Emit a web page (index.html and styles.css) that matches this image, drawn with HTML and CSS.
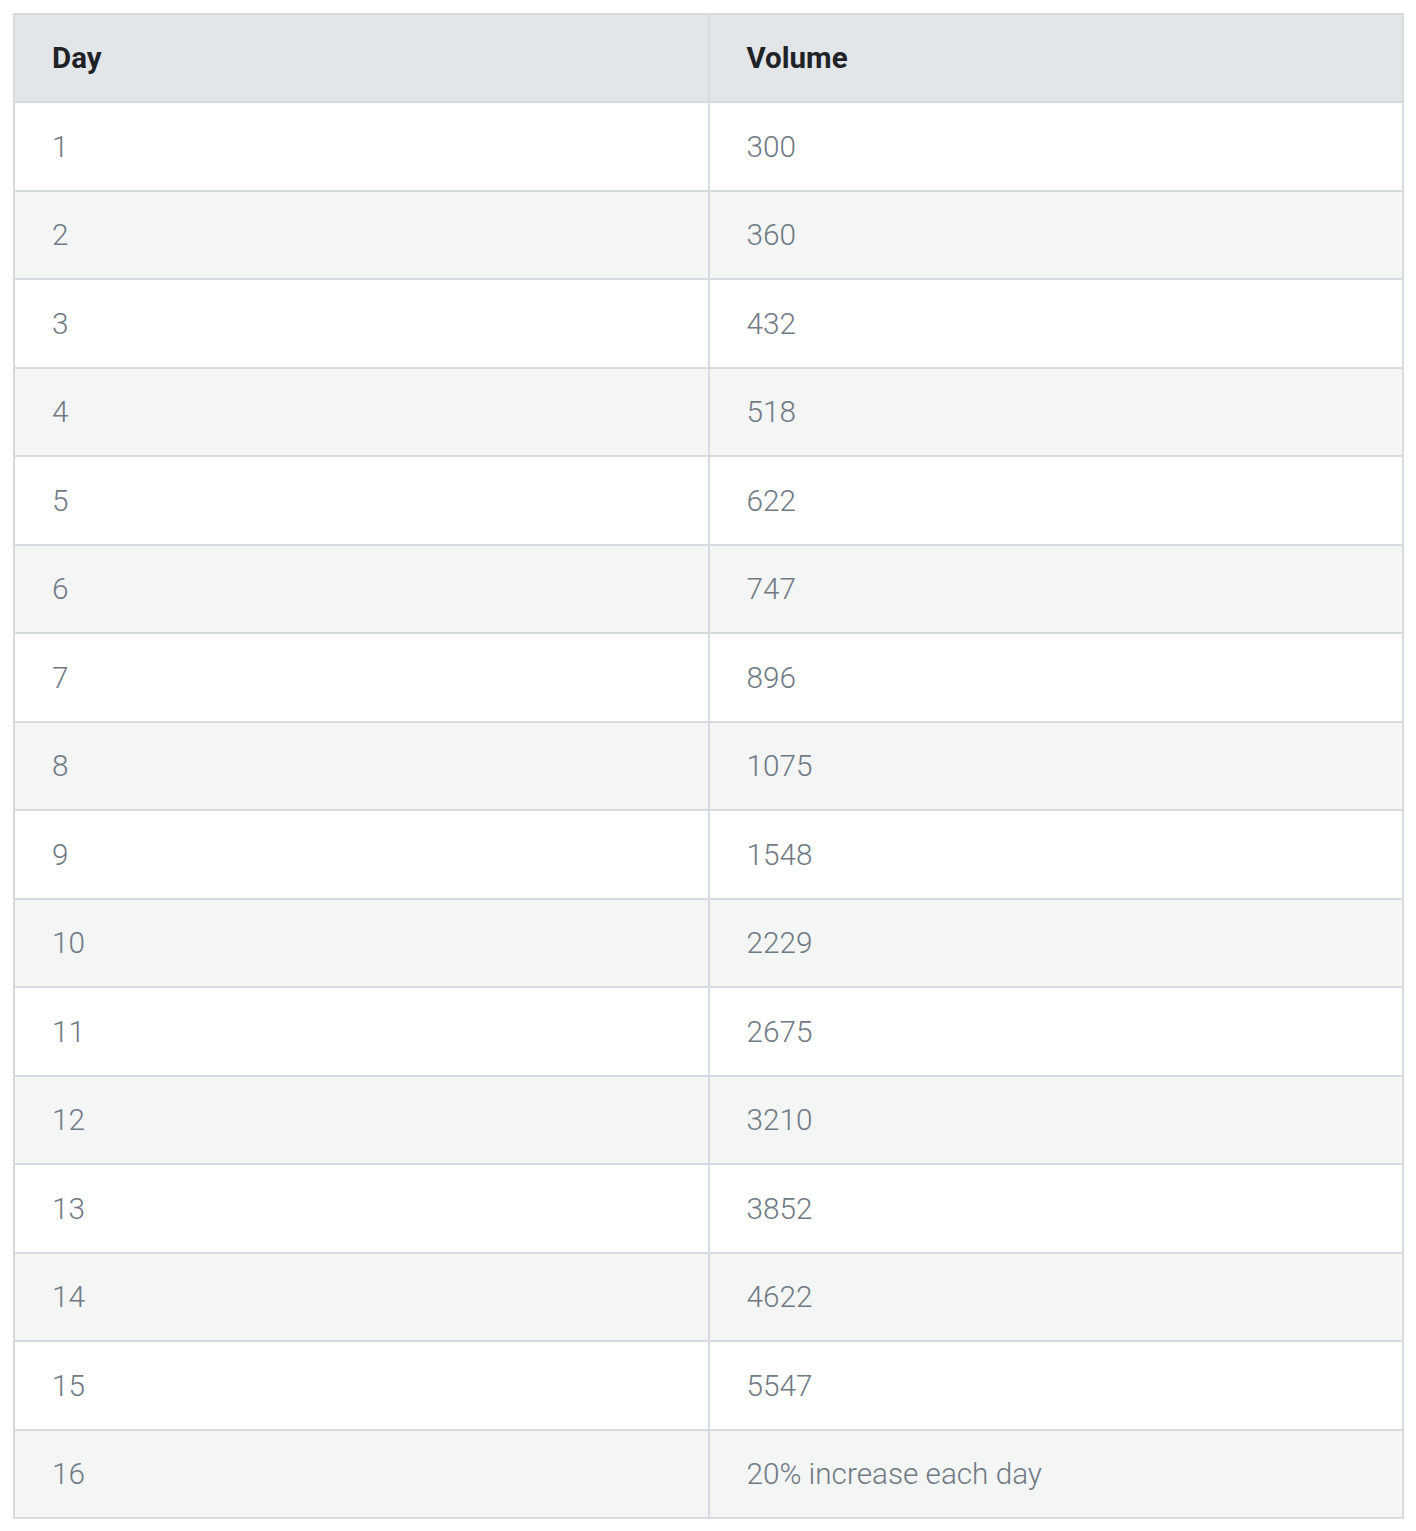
FILE: index.html
```html
<!DOCTYPE html>
<html>
<head>
<meta charset="utf-8">
<link rel="stylesheet" href="styles.css">
</head>
<body>
<div class="wrap">
<table class="vol">
<thead>
<tr><th>Day</th><th>Volume</th></tr>
</thead>
<tbody>
<tr><td>1</td><td>300</td></tr>
<tr><td>2</td><td>360</td></tr>
<tr><td>3</td><td>432</td></tr>
<tr><td>4</td><td>518</td></tr>
<tr><td>5</td><td>622</td></tr>
<tr><td>6</td><td>747</td></tr>
<tr><td>7</td><td>896</td></tr>
<tr><td>8</td><td>1075</td></tr>
<tr><td>9</td><td>1548</td></tr>
<tr><td>10</td><td>2229</td></tr>
<tr><td>11</td><td>2675</td></tr>
<tr><td>12</td><td>3210</td></tr>
<tr><td>13</td><td>3852</td></tr>
<tr><td>14</td><td>4622</td></tr>
<tr><td>15</td><td>5547</td></tr>
<tr><td>16</td><td>20% increase each day</td></tr>
</tbody>
</table>
</div>
</body>
</html>
```

FILE: styles.css
```css
html, body {
  margin: 0;
  padding: 0;
  background: #ffffff;
}
.wrap {
  padding: 13px 12px 13px 13px;
}
.vol {
  width: 1391px;
  border-collapse: collapse;
  table-layout: fixed;
  font-family: Roboto, "Liberation Sans", sans-serif;
  border: 2px solid #d6dbe0;
}
.vol th,
.vol td {
  text-align: left;
  padding: 0 0 0 37px;
  height: 86.5px;
  border: 1px solid #d6dbe0;
  border-width: 2px 2px 0 2px;
  vertical-align: middle;
}
.vol th {
  background: #e2e6e9;
  color: #1f2328;
  font-size: 29.5px;
  font-weight: 700;
  height: 86px;
}
.vol td {
  color: #6f7a84;
  font-size: 29.7px;
  font-weight: 300;
  background: #ffffff;
}
.vol tbody tr:nth-child(even) td {
  background: #f4f5f5;
}
```
